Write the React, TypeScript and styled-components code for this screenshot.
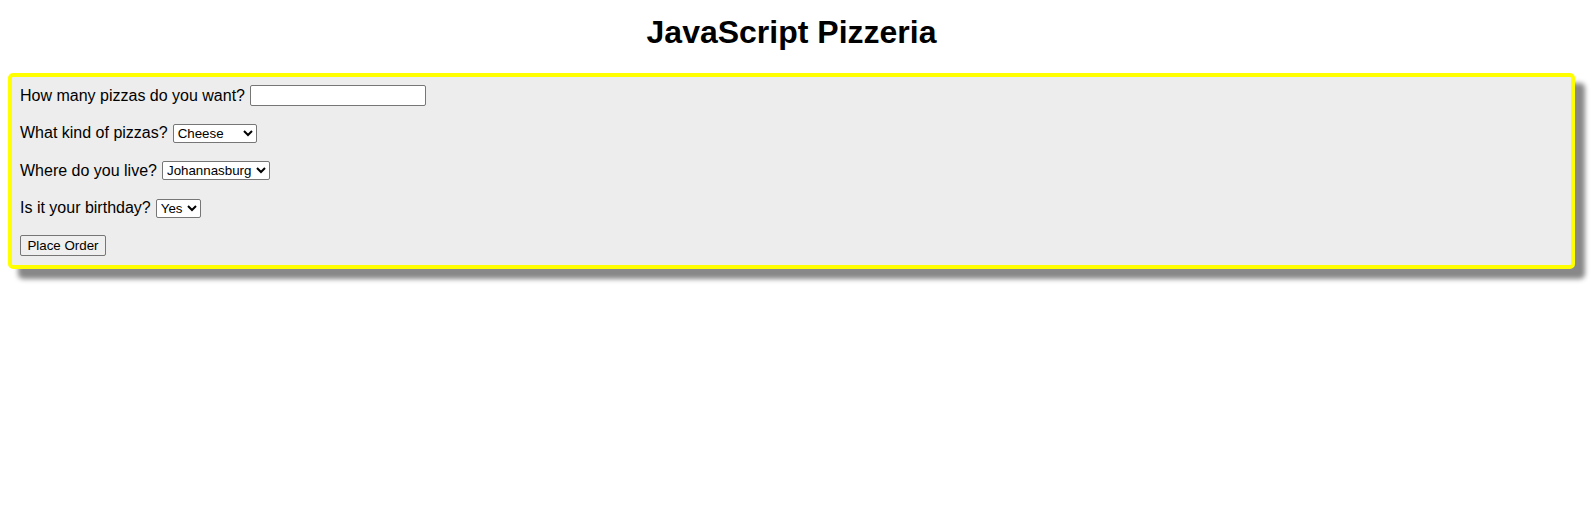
import React from "react";
import styled, { createGlobalStyle } from "styled-components";

const Global = createGlobalStyle`
  html, body { margin: 0; padding: 0; background: #fff; }
  body { font-family: "Liberation Sans", Arial, sans-serif; color: #000; }
`;

const Page = styled.div`
  box-sizing: border-box;
  min-height: 508px;
  padding: 0 16px 24px 8px;
`;

const Title = styled.h1`
  margin: 14px 0 22px;
  font-size: 32px;
  font-weight: bold;
  line-height: 37px;
  text-align: center;
`;

const Panel = styled.form`
  display: flex;
  flex-direction: column;
  align-items: flex-start;
  gap: 16px;
  padding: 8px;
  background: #ededed;
  border: 4px solid #ffff00;
  border-radius: 5px;
  box-shadow: 10px 10px 5px #888888;
`;

const Row = styled.div`
  display: flex;
  align-items: center;
  gap: 4px;
  height: 21.5px;
  font-size: 16px;
`;

const Label = styled.label`
  font-size: 16px;
`;

const TextInput = styled.input`
  box-sizing: border-box;
  width: 176px;
  height: 21px;
  margin: 0 0 0 1px;
  padding: 1px 2px;
  border: 1px solid #767676;
  border-radius: 2px;
  background: #fff;
  font: 13.333px "Liberation Sans", Arial, sans-serif;
`;

const Select = styled.select<{ $w: number }>`
  box-sizing: border-box;
  width: ${(p) => p.$w}px;
  height: 19px;
  margin: 0 0 0 1px;
  padding: 0;
  border: 1px solid #767676;
  border-radius: 2px;
  background: #fff;
  color: #000;
  font: 13.333px "Liberation Sans", Arial, sans-serif;
`;

const Button = styled.button`
  box-sizing: border-box;
  width: 86px;
  height: 21px;
  padding: 1px 6px;
  border: 1px solid #767676;
  border-radius: 2px;
  background: #efefef;
  color: #000;
  font: 13.333px "Liberation Sans", Arial, sans-serif;
`;

export default function App() {
  return (
    <Page>
      <Global />
      <Title>JavaScript Pizzeria</Title>
      <Panel onSubmit={(e) => e.preventDefault()}>
        <Row>
          <Label htmlFor="qty">How many pizzas do you want?</Label>
          <TextInput id="qty" type="text" />
        </Row>
        <Row>
          <Label htmlFor="kind">What kind of pizzas?</Label>
          <Select id="kind" $w={84}>
            <option>Cheese</option>
            <option>Pepperoni</option>
            <option>Hawaiian</option>
          </Select>
        </Row>
        <Row>
          <Label htmlFor="city">Where do you live?</Label>
          <Select id="city" $w={108}>
            <option>Johannasburg</option>
            <option>Cape Town</option>
            <option>Durban</option>
          </Select>
        </Row>
        <Row>
          <Label htmlFor="bday">Is it your birthday?</Label>
          <Select id="bday" $w={45}>
            <option>Yes</option>
            <option>No</option>
          </Select>
        </Row>
        <Row>
          <Button type="submit">Place Order</Button>
        </Row>
      </Panel>
    </Page>
  );
}
